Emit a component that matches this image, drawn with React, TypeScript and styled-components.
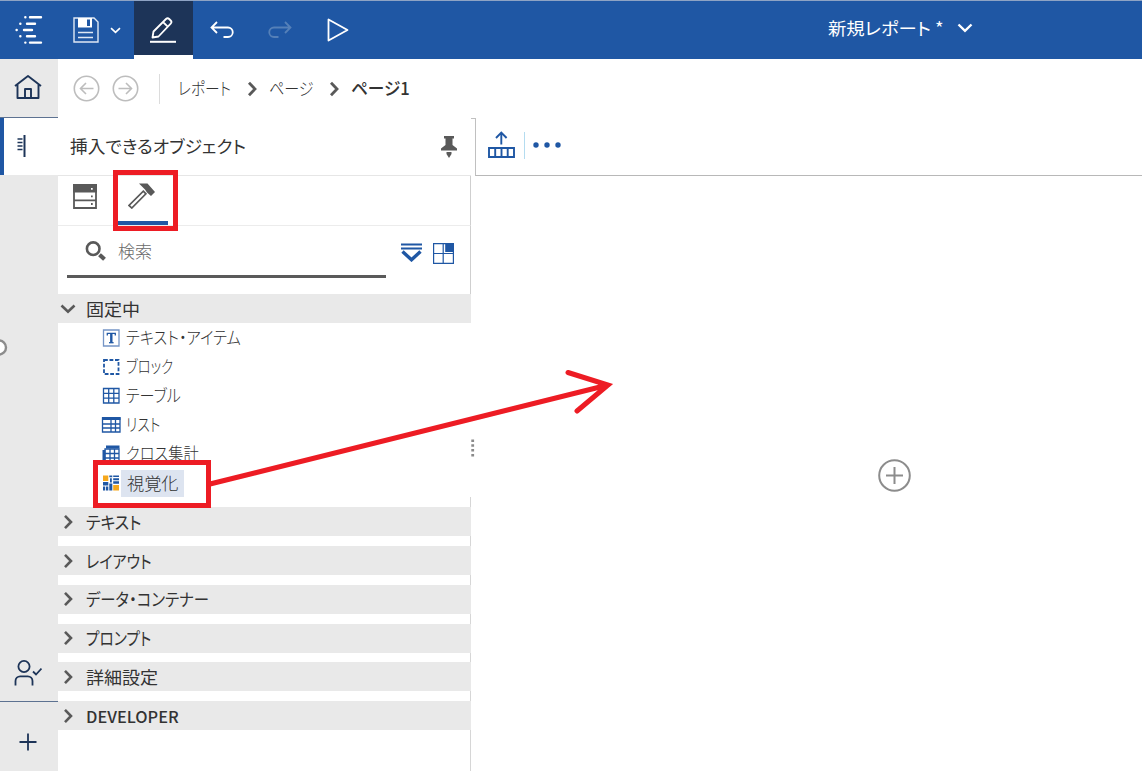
import React from 'react';
import styled, { createGlobalStyle } from 'styled-components';

const BLUE = '#1f57a4';
const NAVY = '#1d3458';
const GREY = '#595959';
const RED = '#ed1c24';

const GlobalStyle = createGlobalStyle`
  * { box-sizing: border-box; }
  body {
    margin: 0;
    background: #fff;
    color: #3a3a3a;
    font-family: "Noto Sans CJK JP", sans-serif;
    font-feature-settings: "palt";
  }
  svg { display: block; flex: none; }
`;

const Screen = styled.div`
  position: relative;
  width: 1142px;
  height: 771px;
  overflow: hidden;
  display: flex;
  flex-direction: column;
`;

const Label = styled.span<{ $size?: number; $stretch?: number; $weight?: number; $color?: string; $lift?: number }>`
  display: inline-block;
  font-size: ${p => p.$size ?? 17.5}px;
  font-weight: ${p => p.$weight ?? 400};
  color: ${p => p.$color ?? '#333'};
  line-height: 24px;
  margin-bottom: ${p => (p.$lift ?? 0) * 2}px;
  white-space: nowrap;
  transform: scaleX(${p => p.$stretch ?? 1});
  transform-origin: left center;
`;

const TopBar = styled.header`
  height: 59px;
  flex: none;
  display: flex;
  background: ${BLUE};
  border-top: 1px solid #8ea3c4;
`;

const ToolSlot = styled.div<{ $width: number }>`
  width: ${p => p.$width}px;
  display: flex;
  align-items: center;
  justify-content: center;
`;

const SaveSlot = styled(ToolSlot)`
  justify-content: flex-start;
  padding-left: 15px;
  gap: 11px;
`;

const ActiveSlot = styled(ToolSlot)`
  background: ${NAVY};
  padding: 3px 2px 0 0;
  border-bottom: 4px solid #fff;
`;

const ReportTitle = styled.div`
  margin-left: 461px;
  display: flex;
  height: 54px;
  align-items: center;
  gap: 19px;
`;

const Body = styled.div`
  flex: 1;
  display: flex;
  min-height: 0;
`;

const Rail = styled.nav`
  width: 58px;
  flex: none;
  display: flex;
  flex-direction: column;
  background: #e9e9e9;
`;

const RailCell = styled.div<{ $height: number; $line?: boolean; $top?: number }>`
  height: ${p => p.$height}px;
  display: flex;
  align-items: center;
  justify-content: center;
  padding: ${p => p.$top ?? 0}px 2px 0 0;
  border-bottom: ${p => (p.$line ? '1px solid #5d7291' : '0')};
`;

const RailActive = styled(RailCell)`
  background: #fff;
  border-left: 4px solid ${BLUE};
  justify-content: flex-start;
  padding: 0 0 1px 13px;
`;

const RailSpacer = styled.div`
  flex: 1;
  display: flex;
  padding-top: 163px;
`;

const Content = styled.div`
  flex: 1;
  display: flex;
  flex-direction: column;
  min-width: 0;
`;

const Crumbs = styled.div`
  height: 59px;
  flex: none;
  display: flex;
  align-items: center;
  padding-left: 15px;
`;

const CrumbRule = styled.i`
  width: 1px;
  height: 30px;
  background: #dcdcdc;
  margin: 0 18px 0 20px;
`;

const CrumbCell = styled.div<{ $width: number }>`
  width: ${p => p.$width}px;
  flex: none;
  display: flex;
`;

const Columns = styled.div`
  flex: 1;
  display: flex;
  min-height: 0;
`;

const Panel = styled.section`
  width: 413px;
  flex: none;
  display: flex;
  flex-direction: column;
`;

const PanelHead = styled.div`
  height: 58px;
  display: flex;
  align-items: center;
  justify-content: space-between;
  padding: 0 14px 0 12px;
  border-bottom: 1px solid #e6e6e6;
`;

const PanelTabs = styled.div`
  height: 50px;
  display: flex;
  border-bottom: 1px solid #ececec;
  border-right: 1px solid #cfcfcf;
`;

const Tab = styled.div<{ $left: number; $width: number; $active?: boolean }>`
  width: ${p => p.$width}px;
  height: 49px;
  display: flex;
  padding: ${p => (p.$active ? 7 : 8)}px 0 0 ${p => p.$left}px;
  border-bottom: ${p => (p.$active ? `4px solid ${BLUE}` : '0')};
`;

const SearchRow = styled.div`
  height: 68px;
  display: flex;
  padding-left: 9px;
  border-right: 1px solid #cfcfcf;
`;

const SearchField = styled.div`
  width: 319px;
  height: 52px;
  display: flex;
  align-items: center;
  gap: 11px;
  padding-left: 18px;
  border-bottom: 3px solid #5a5a5a;
`;

const SearchActions = styled.div`
  display: flex;
  gap: 11px;
  padding: 17px 0 0 15px;
`;

const GroupHead = styled.div`
  height: 29px;
  flex: none;
  display: flex;
  align-items: center;
  gap: 10px;
  padding-left: 2px;
  background: #e9e9e9;
`;

const GroupList = styled.div`
  flex: 1;
  display: flex;
  flex-direction: column;
  gap: 9.8px;
  padding-top: 10.3px;
  border-right: 1px solid #d6d6d6;

  ${GroupHead} { margin-right: -1px; }
`;

const Items = styled.div`
  height: 174px;
  flex: none;
  padding-left: 43px;
`;

const Item = styled.div`
  height: 29.1px;
  display: flex;
  align-items: center;
  gap: 5px;
`;

const Selected = styled.div`
  display: flex;
  align-items: center;
  height: 27px;
  width: 63px;
  padding-left: 6px;
  margin-left: -5px;
  background: #dde4f0;
`;

const Canvas = styled.main`
  flex: 1;
  display: flex;
  flex-direction: column;
  min-width: 0;
`;

const CanvasTop = styled.div`
  display: flex;
  flex: none;
`;

const Notch = styled.i`
  width: 4px;
  height: 1px;
  background: #c0c0c0;
`;

const CanvasTools = styled.div`
  height: 58px;
  flex: 1;
  display: flex;
  align-items: center;
  padding: 0 0 3px 12px;
  border-left: 1px solid #c0c0c0;
  border-bottom: 1px solid #b8b8b8;
`;

const ToolsRule = styled.i`
  width: 1px;
  height: 27px;
  margin: 0 8px 0 9px;
  background: #b4dcf0;
`;

const CanvasBody = styled.div`
  flex: 1;
  display: flex;
  align-items: center;
  justify-content: space-between;
  padding: 4px 231px 0 0;
`;

const GripArea = styled.div`
  margin-bottom: 55px;
`;

const Overlay = styled.svg`
  position: absolute;
  inset: 0;
  pointer-events: none;
`;

const Chevron = ({ dir, color = GREY, w = 2.6, size = 16 }: { dir: 'down' | 'right'; color?: string; w?: number; size?: number }) => (
  <svg width={size} height={size} viewBox="0 0 16 16" fill="none" stroke={color} strokeWidth={w}>
    <path d={dir === 'down' ? 'M1.5 4.500l6.500 6.300 6.500-6.300' : 'M5 1.800l6 6.200-6 6.200'} />
  </svg>
);

const Logo = () => (
  <svg width="28" height="30" viewBox="0 0 28 30" stroke="#fff" strokeWidth="2.400" strokeLinecap="round">
    <path d="M15 2.300h11M12 8.700h8M9 15h8M12 21.200h8M15 27.600h11M10.300 2.300h.1M5.300 8.700h.1M1.600 15h.1M5.300 21.200h.1M10.300 27.600h.1" />
  </svg>
);

const Save = () => (
  <svg width="26" height="26" viewBox="0 0 26 26" fill="none" stroke="#dfe8f4" strokeWidth="1.400">
    <path d="M1 1h20l4 4v20H1z" />
    <path d="M5 1h14v9.500H5z" fill="#fff" stroke="none" />
    <path d="M14 2.500h3v6.500h-3z" fill={BLUE} stroke="none" />
    <path d="M5 15.500h15M5 20.500h15" strokeWidth="1.600" />
  </svg>
);

const Pencil = () => (
  <svg width="26" height="26" viewBox="0 0 26 26" fill="none" stroke="#fff" strokeWidth="1.800" strokeLinejoin="round">
    <path d="M2.500 20.500l1-6L16 2a2.300 2.300 0 0 1 3.200 0l1.500 1.500a2.300 2.300 0 0 1 0 3.200L8.500 19.500zM13 5l4.700 4.700" />
    <path d="M0 24.800h26" strokeWidth="2" />
  </svg>
);

const Undo = ({ flip }: { flip?: boolean }) => (
  <svg width="24" height="18" viewBox="0 0 24 18" fill="none" stroke={flip ? '#5580b8' : '#fff'} strokeWidth="1.800">
    <g transform={flip ? 'translate(24 0) scale(-1 1)' : undefined}>
      <path d="M7 1L1.500 6.500 7 12M1.500 6.500H18a4.700 4.700 0 0 1 0 9.500h-4.500" />
    </g>
  </svg>
);

const Play = () => (
  <svg width="22" height="24" viewBox="0 0 22 24" fill="none" stroke="#fff" strokeWidth="1.800" strokeLinejoin="round">
    <path d="M1.500 1.500v21L20.500 12z" />
  </svg>
);

const Home = () => (
  <svg width="28" height="26" viewBox="0 0 28 26" fill="none" stroke={NAVY} strokeWidth="1.900" strokeLinejoin="round">
    <path d="M1 11L14 1l13 10M3.500 9.500v13.500h21V9.500M11 23v-9h6v9" />
  </svg>
);

const Nav = ({ flip }: { flip?: boolean }) => (
  <svg width="27" height="27" viewBox="0 0 27 27" fill="none" stroke="#bdbdbd" strokeWidth="1.600">
    <circle cx="13.500" cy="13.500" r="12.200" />
    <g transform={flip ? 'translate(27 0) scale(-1 1)' : undefined}>
      <path d="M13 8l-5.500 5.500L13 19M7.500 13.500h13" />
    </g>
  </svg>
);

const Insert = () => (
  <svg width="10" height="22" viewBox="0 0 10 22" stroke={NAVY}>
    <path d="M7.500 0v22" strokeWidth="2" />
    <path d="M.5 4h5M.5 7.500h5M.5 11h5M.5 14.500h5" strokeWidth="1.400" />
  </svg>
);

const Handle = () => (
  <svg width="8" height="18" viewBox="0 0 8 18" fill="#fff" stroke="#8c8c8c" strokeWidth="2.400">
    <circle cx="-1" cy="9.500" r="7" />
  </svg>
);

const UserCheck = () => (
  <svg width="28" height="26" viewBox="0 0 28 26" fill="none" stroke={NAVY} strokeWidth="1.800">
    <circle cx="10" cy="6.500" r="5.600" />
    <path d="M1.500 25.500V21a4.700 4.700 0 0 1 4.700-4.700h7.600a4.700 4.700 0 0 1 4.700 4.700v4.500M19 11.500l3 3 5.500-6" />
  </svg>
);

const Plus = () => (
  <svg width="18" height="18" viewBox="0 0 18 18" stroke={NAVY} strokeWidth="1.800">
    <path d="M9 .5v17M.5 9h17" />
  </svg>
);

const Pin = () => (
  <svg width="16" height="22" viewBox="0 0 16 22" fill={GREY}>
    <path d="M3 0h10v2.500h-1.500v6.500l4.500 3.500v2H0v-2L4.500 9V2.500H3zM5.500 16h5v2L8 22l-2.500-4z" />
  </svg>
);

const Sources = () => (
  <svg width="24" height="25" viewBox="0 0 24 25" fill="none" stroke={GREY} strokeWidth="1.800">
    <path d="M0 0h24v8.500H0z" fill={GREY} stroke="none" />
    <path d="M1 8v16h22V8M1 16.300h22" />
    <path d="M18 4.800h1.700" stroke="#fff" />
    <path d="M18 12.400h1.700M18 20h1.700" />
  </svg>
);

const Hammer = () => (
  <svg width="28" height="26" viewBox="0 0 28 26" fill="none" stroke={GREY}>
    <path d="M11 .5h8.500l7.500 8.500-4 4-4-3.500-2-3z" fill={GREY} stroke="none" />
    <path d="M15.300 8.200l2.600 2.600L3.800 25 1 22.400z" strokeWidth="1.700" />
  </svg>
);

const Search = () => (
  <svg width="22" height="20" viewBox="0 0 22 20" fill="none" stroke={GREY}>
    <circle cx="8.200" cy="7.700" r="6.300" strokeWidth="2.600" />
    <path d="M14.500 13.700l5 4.500" strokeWidth="4.200" />
  </svg>
);

const Collapse = () => (
  <svg width="21" height="19" viewBox="0 0 21 19" fill="none" stroke={BLUE}>
    <path d="M0 1.500h21M0 5.500h21" strokeWidth="2" />
    <path d="M1.500 8.500l9 8.300 9-8.300" strokeWidth="3.400" />
  </svg>
);

const Tiles = () => (
  <svg width="21" height="21" viewBox="0 0 21 21" fill="none" stroke={BLUE} strokeWidth="1.200">
    <path d="M.6.6h19.800v19.800H.6zM10.200.6v19.800M.6 10.500h19.800" />
    <path d="M12.200 1h8.300v8h-8.300z" fill={BLUE} stroke="none" />
  </svg>
);

const ItemIcon = ({ kind }: { kind: string }) => (
  <svg width="20" height="18" viewBox="0 0 20 18" fill="none" stroke={BLUE} strokeWidth="1.300">
    {kind === 'text' && (
      <>
        <path d="M2.500 1h15.500v16H2.500z" stroke="#7595c6" />
        <path d="M6.300 6.500V4.300h8v2.200" strokeWidth="1.300" />
        <path d="M10.300 4.300v9.200" strokeWidth="2.400" />
        <path d="M8 13.700h4.600" />
      </>
    )}
    {kind === 'block' && <path d="M3 2h14.500v14H3z" strokeWidth="1.800" strokeDasharray="3.800 1.700" />}
    {kind === 'table' && <path d="M2.500 1.500h15.500v14.500H2.500zM7.700 1.500V16M12.800 1.500V16M2.500 6.300h15.500M2.500 11.200h15.500" />}
    {kind === 'list' && (
      <>
        <path d="M1.500 2h17.500v14H1.500zM10 2v14M14.500 2v14M1.500 8h17.500M1.500 12h17.500" />
        <path d="M1 2.500h18.500" strokeWidth="3" />
      </>
    )}
    {kind === 'crosstab' && (
      <>
        <path d="M4 4h14v13.500H4zM9 4v13.500M13.500 4v13.500M4 8.500h14M4 13h14" />
        <path d="M5 2h13.500M3 5v13" strokeWidth="3" />
      </>
    )}
    {kind === 'viz' && (
      <g stroke="none">
        <path d="M2 1.500h5.300v5.500H2zM12.200 11h5.800v5.500h-5.800z" fill="#f6a81c" />
        <path d="M2 8h5.300v3.500H2zM2 12.500h2.200v4H2zM5 12.500h2.300v4H5zM8.300 1.500h3v1.700h-3zM9 4.300h1.800v4.200H9zM8.300 9.500h3v7h-3zM12.200 1.500h5.800v1.600h-5.800zM12.200 4.200h5.800v2h-5.800zM12.200 7.300h5.800v2.500h-5.800z" fill={BLUE} />
      </g>
    )}
  </svg>
);

const Promote = () => (
  <svg width="27" height="28" viewBox="0 0 27 28" fill="none" stroke={BLUE} strokeWidth="1.900">
    <path d="M13.300 13.500V2M8 7l5.300-5.500L18.600 7M1 17h25v9H1zM7.200 17v9M13.500 17v9M19.700 17v9" />
  </svg>
);

const Dots = () => (
  <svg width="28" height="6" viewBox="0 0 28 6" fill={BLUE}>
    <circle cx="3" cy="3" r="2.700" /><circle cx="14" cy="3" r="2.700" /><circle cx="25" cy="3" r="2.700" />
  </svg>
);

const Grip = () => (
  <svg width="4" height="20" viewBox="0 0 4 20" fill="#8a8a8a">
    <path d="M.3 1.500h2.800v2.500H.3zM.3 6.300h2.800v2.500H.3zM.3 11.100h2.800v2.500H.3zM.3 15.900h2.800v2.500H.3z" />
  </svg>
);

const AddCircle = () => (
  <svg width="33" height="33" viewBox="0 0 33 33" fill="none" stroke="#8c8c8c" strokeWidth="2">
    <circle cx="16.500" cy="16.500" r="15.300" />
    <path d="M16.500 8v17M8 16.500h17" />
  </svg>
);

const items = [
  { kind: 'text', label: 'テキスト・アイテム', stretch: 0.87 },
  { kind: 'block', label: 'ブロック', stretch: 0.76 },
  { kind: 'table', label: 'テーブル', stretch: 0.86 },
  { kind: 'list', label: 'リスト', stretch: 0.79 },
  { kind: 'crosstab', label: 'クロス集計', stretch: 0.87 },
];

const groups = [
  { label: 'テキスト', stretch: 0.91 },
  { label: 'レイアウト', stretch: 0.86 },
  { label: 'データ・コンテナー', stretch: 0.88 },
  { label: 'プロンプト', stretch: 0.84 },
  { label: '詳細設定', stretch: 1.03 },
];

export default function App() {
  return (
    <Screen>
      <GlobalStyle />
      <TopBar>
        <ToolSlot $width={58}><Logo /></ToolSlot>
        <SaveSlot $width={76}>
          <Save />
          <Chevron dir="down" color="#fff" w={2.4} size={11} />
        </SaveSlot>
        <ActiveSlot $width={59}><Pencil /></ActiveSlot>
        <ToolSlot $width={57}><Undo /></ToolSlot>
        <ToolSlot $width={59}><Undo flip /></ToolSlot>
        <ToolSlot $width={58}><Play /></ToolSlot>
        <ReportTitle>
          <Label $color="#fff" $stretch={1.05} $lift={0.5}>新規レポート *</Label>
          <Chevron dir="down" color="#fff" w={2.4} />
        </ReportTitle>
      </TopBar>
      <Body>
        <Rail>
          <RailCell $height={59} $line><Home /></RailCell>
          <RailActive $height={57}><Insert /></RailActive>
          <RailSpacer><Handle /></RailSpacer>
          <RailCell $height={58} $line><UserCheck /></RailCell>
          <RailCell $height={69} $top={11}><Plus /></RailCell>
        </Rail>
        <Content>
          <Crumbs>
            <CrumbCell $width={39}><Nav /></CrumbCell>
            <CrumbCell $width={27}><Nav flip /></CrumbCell>
            <CrumbRule />
            <CrumbCell $width={66}><Label $weight={300} $stretch={0.84} $lift={1}>レポート</Label></CrumbCell>
            <CrumbCell $width={25}><Chevron dir="right" w={2.8} /></CrumbCell>
            <CrumbCell $width={57}><Label $weight={300} $stretch={0.86} $lift={1}>ページ</Label></CrumbCell>
            <CrumbCell $width={25}><Chevron dir="right" w={2.8} /></CrumbCell>
            <Label $weight={500} $stretch={0.95} $lift={1}>ページ1</Label>
          </Crumbs>
          <Columns>
            <Panel>
              <PanelHead>
                <Label $stretch={1.012} $lift={1}>挿入できるオブジェクト</Label>
                <Pin />
              </PanelHead>
              <PanelTabs>
                <Tab $left={15} $width={55}><Sources /></Tab>
                <Tab $left={15} $width={55} $active><Hammer /></Tab>
              </PanelTabs>
              <SearchRow>
                <SearchField>
                  <Search />
                  <Label $color="#6a6a6a" $weight={300} $stretch={0.97}>検索</Label>
                </SearchField>
                <SearchActions><Collapse /><Tiles /></SearchActions>
              </SearchRow>
              <GroupHead>
                <Chevron dir="down" />
                <Label $stretch={1.03}>固定中</Label>
              </GroupHead>
              <Items>
                {items.map(i => (
                  <Item key={i.kind}>
                    <ItemIcon kind={i.kind} />
                    <Label $stretch={i.stretch} $weight={300} $lift={0.5}>{i.label}</Label>
                  </Item>
                ))}
                <Item>
                  <ItemIcon kind="viz" />
                  <Selected><Label $weight={300} $stretch={0.98}>視覚化</Label></Selected>
                </Item>
              </Items>
              <GroupList>
                {groups.map(g => (
                  <GroupHead key={g.label}>
                    <Chevron dir="right" />
                    <Label $stretch={g.stretch}>{g.label}</Label>
                  </GroupHead>
                ))}
                <GroupHead>
                  <Chevron dir="right" />
                  <Label $size={16} $weight={500} $stretch={1.02}>DEVELOPER</Label>
                </GroupHead>
              </GroupList>
            </Panel>
            <Canvas>
              <CanvasTop>
                <Notch />
                <CanvasTools>
                  <Promote />
                  <ToolsRule />
                  <Dots />
                </CanvasTools>
              </CanvasTop>
              <CanvasBody>
                <GripArea><Grip /></GripArea>
                <AddCircle />
              </CanvasBody>
            </Canvas>
          </Columns>
        </Content>
      </Body>
      <Overlay width="1142" height="771" viewBox="0 0 1142 771" fill="none" stroke={RED} strokeWidth="5">
        <path d="M115.500 172.500h60v56h-60zM95.500 462.500h113v43h-113z" />
        <path d="M210 484L608 385M568 372.500L608 385 577 411" strokeLinecap="round" />
      </Overlay>
    </Screen>
  );
}
